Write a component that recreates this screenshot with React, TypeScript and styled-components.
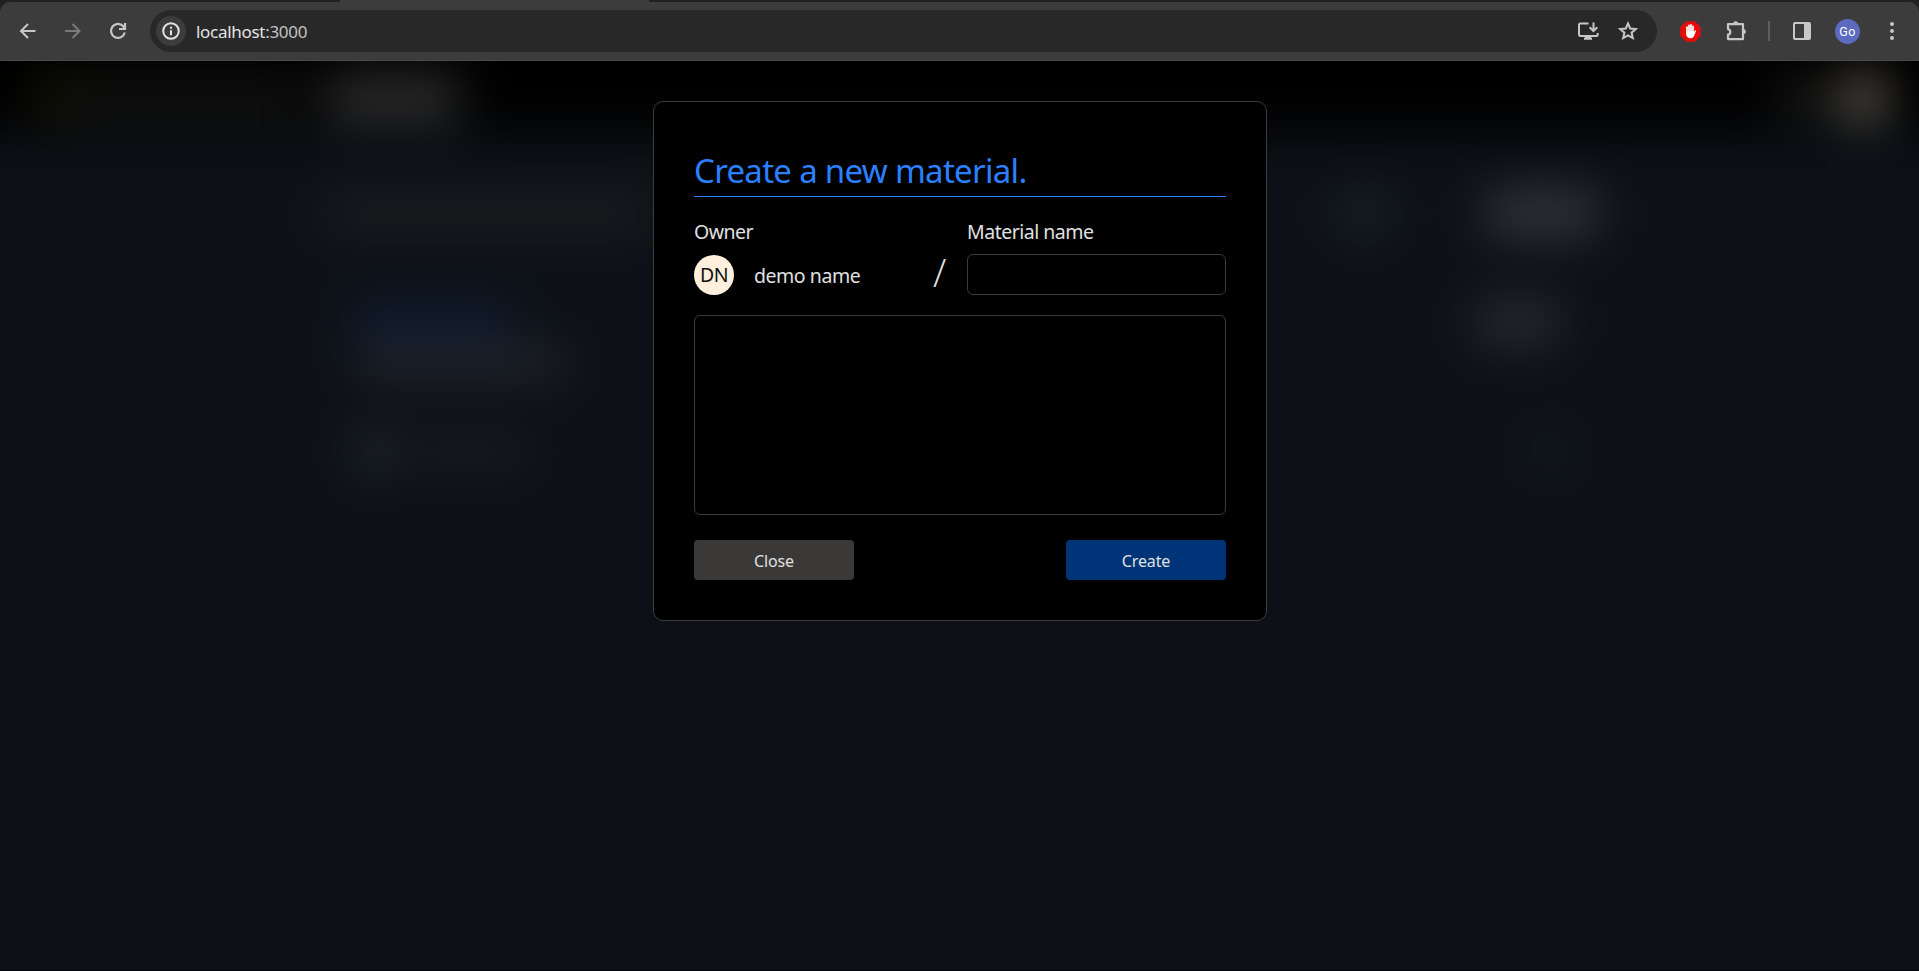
import React from "react";
import styled, { createGlobalStyle } from "styled-components";

const GlobalStyle = createGlobalStyle`
  * { box-sizing: border-box; }
  html, body, #root { height: 100%; }
  body {
    margin: 0;
    overflow: hidden;
    background: #0d1117;
    color: #e0e0e0;
    font-family: "Noto Sans", "Open Sans", sans-serif;
  }
`;

const Window = styled.div`
  height: 100vh;
  display: flex;
  flex-direction: column;
  background: #202121;
`;

const TabStrip = styled.div`
  height: 2px;
  flex: none;
  display: flex;
  padding-left: 340px;
`;

const ActiveTab = styled.div`
  width: 309px;
  background: #3c3c3c;
`;

const Toolbar = styled.header`
  height: 59px;
  flex: none;
  display: flex;
  align-items: center;
  padding: 0 12px 0 12px;
  background: #3c3c3c;
  border-bottom: 1px solid #4a4a4a;
  border-radius: 10px 10px 0 0;
`;

const IconSlot = styled.div<{ $width: number; $color?: string }>`
  width: ${(p) => p.$width}px;
  height: 30px;
  flex: none;
  display: flex;
  align-items: center;
  justify-content: center;
  color: ${(p) => p.$color ?? "#c7c7c7"};
  svg { display: block; }
`;

const AddressBar = styled.div`
  width: 1507px;
  height: 42px;
  flex: none;
  display: flex;
  align-items: center;
  padding: 0 9px 0 6px;
  border-radius: 21px;
  background: #282828;
`;

const InfoBadge = styled.div`
  width: 30px;
  height: 30px;
  display: flex;
  align-items: center;
  justify-content: center;
  border-radius: 50%;
  background: #3c3c3c;
  color: #e3e3e3;
`;

const Address = styled.div`
  flex: 1;
  padding: 1px 0 0 10px;
  font-size: 17px;
  line-height: 24px;
  letter-spacing: -0.3px;
  color: #e3e3e3;
  span { color: #c2c2c2; }
`;

const Divider = styled.div`
  width: 2px;
  height: 20px;
  background: #5e5e5e;
`;

const Profile = styled.div`
  width: 25px;
  height: 25px;
  border-radius: 50%;
  background: #5c6bc0;
  color: #fff;
  font: 12.5px/26px Roboto, sans-serif;
  letter-spacing: 0.4px;
  text-align: center;
`;

const Viewport = styled.main`
  position: relative;
  flex: 1;
  overflow: hidden;
  display: flex;
  justify-content: center;
  align-items: flex-start;
  padding: 40px 0 0 1px;
  background: #0d1117;
  border-bottom: 1px solid #060709;
`;

/* Page behind the dialog; it bleeds past the edges so the blur stays even. */
const Backdrop = styled.div`
  position: absolute;
  inset: -80px;
  background: #0d1117;
  filter: blur(24px);
`;

const BackHeader = styled.div`
  height: 154px;
  padding: 80px 80px 0;
  display: flex;
  align-items: center;
  background: #000;
`;

const BackRow = styled.div<{ $top: number; $height: number }>`
  display: flex;
  align-items: center;
  height: ${(p) => p.$height}px;
  margin-top: ${(p) => p.$top}px;
  padding: 0 80px;
`;

const Block = styled.div<{ $w: number; $h: number; $gap: number; $c: string; $round?: boolean }>`
  flex: none;
  width: ${(p) => p.$w}px;
  height: ${(p) => p.$h}px;
  margin-left: ${(p) => p.$gap}px;
  background: ${(p) => p.$c};
  border-radius: ${(p) => (p.$round ? "50%" : "4px")};
`;

const Dialog = styled.form`
  position: relative;
  width: 614px;
  height: 520px;
  padding: 40px;
  display: flex;
  flex-direction: column;
  border: 1px solid #3b3b3b;
  border-radius: 10px;
  background: #000;
`;

const Title = styled.h1`
  flex: none;
  height: 55px;
  margin: 0 0 20px;
  border-bottom: 1px solid #2b80ff;
  color: #2b80ff;
  font-size: 33px;
  font-weight: 400;
  line-height: 57px;
  letter-spacing: -0.7px;
`;

const Fields = styled.div`
  display: flex;
  margin-bottom: 20px;
`;

const Field = styled.div<{ $width: number }>`
  width: ${(p) => p.$width}px;
`;

const Label = styled.label`
  display: block;
  height: 37px;
  font-size: 19.5px;
  line-height: 29px;
  letter-spacing: -0.5px;
`;

const OwnerLine = styled.div`
  height: 41px;
  display: flex;
  align-items: center;
  font-size: 19.5px;
  letter-spacing: -0.45px;
`;

const Avatar = styled.div`
  width: 40px;
  height: 40px;
  margin: 1px 20px 0 0;
  border-radius: 50%;
  background: #fff0de;
  color: #111;
  line-height: 39px;
  text-align: center;
`;

const OwnerName = styled.span`
  flex: 1;
  padding-top: 2px;
`;

const Slash = styled.span`
  width: 34px;
  font-family: "Open Sans", "Noto Sans", sans-serif;
  font-size: 39px;
  font-weight: 300;
  line-height: 40px;
  padding-bottom: 6px;
`;

const NameInput = styled.input`
  display: block;
  width: 259px;
  height: 41px;
  border: 1px solid #3b3b3b;
  border-radius: 6px;
  background: #000;
  color: #e0e0e0;
  outline: none;
`;

const Description = styled.textarea`
  display: block;
  width: 100%;
  height: 200px;
  margin-bottom: 25px;
  resize: none;
  border: 1px solid #3b3b3b;
  border-radius: 6px;
  background: #000;
  color: #e0e0e0;
  outline: none;
`;

const Actions = styled.div`
  display: flex;
  justify-content: space-between;
`;

const Button = styled.button<{ $primary?: boolean }>`
  width: 160px;
  height: 40px;
  padding: 1px 0 0;
  border: 0;
  border-radius: 4px;
  background: ${(p) => (p.$primary ? "#003478" : "#3b3838")};
  color: #e0e0e0;
  font: 16px/24px "Noto Sans", sans-serif;
  letter-spacing: -0.1px;
`;

const BackIcon = () => (
  <svg width="20" height="20" viewBox="0 0 20 20" fill="none" stroke="currentColor" strokeWidth="2">
    <path d="M17.5 10H3.5M10 3L3 10l7 7" />
  </svg>
);

const ForwardIcon = () => (
  <svg width="20" height="20" viewBox="0 0 20 20" fill="none" stroke="currentColor" strokeWidth="2">
    <path d="M2 10h14M9.5 3l7 7-7 7" />
  </svg>
);

const ReloadIcon = () => (
  <svg width="20" height="20" viewBox="0 0 20 20" fill="none" stroke="currentColor" strokeWidth="2.2">
    <path d="M16.8 11.6A7 7 0 1 1 15.2 5.2l1.6 2M17 2v6h-6" />
  </svg>
);

const InfoIcon = () => (
  <svg width="20" height="20" viewBox="0 0 20 20" fill="none" stroke="currentColor" strokeWidth="2">
    <circle cx="10" cy="10" r="7.8" />
    <path d="M10 9.2v5M10 5.7v2" />
  </svg>
);

const InstallIcon = () => (
  <svg width="22" height="20" viewBox="0 0 22 20" fill="none" stroke="currentColor" strokeWidth="2">
    <path d="M11.5 2.5H3.2a1.2 1.2 0 0 0-1.2 1.2v10.1a1.2 1.2 0 0 0 1.2 1.2h16.3a1.2 1.2 0 0 0 1.2-1.2V12" />
    <path d="M7 17.8h8M16.5 1.5v8.2M12.7 6.3l3.8 3.8 3.8-3.8" />
    <path d="M8 16.3h6" />
  </svg>
);

const StarIcon = () => (
  <svg width="22" height="22" viewBox="0 0 22 22" fill="none" stroke="currentColor" strokeWidth="2">
    <path d="M11 3.4l2.2 5.1 5.6.5-4.2 3.7 1.2 5.4-4.8-2.8-4.8 2.8 1.2-5.4L3.2 9l5.6-.5z" />
  </svg>
);

const StopHandIcon = () => (
  <svg width="21" height="21" viewBox="0 0 21 21">
    <path d="M6.2.2h8.6l6 6v8.6l-6 6H6.2l-6-6V6.2z" fill="#e40d0d" />
    <g stroke="#fff" strokeWidth="1.7" strokeLinecap="round">
      <path d="M7 6v7M9 4.3v7M11 3.9v7M13 5.3v7" />
    </g>
    <path d="M6.2 10h7.6v1.6l1-1.8c.5-.8 1.5-.4 1.2.5l-1.7 4c-.7 1.9-1.7 2.9-3.7 2.9-2.8 0-4.4-1.7-4.4-4.2z" fill="#fff" />
  </svg>
);

const PuzzleIcon = () => (
  <svg width="22" height="22" viewBox="0 0 22 22" fill="currentColor">
    <path
      d="M3 4.1h15v15H3v-4.4c3-.4 3-5.2 0-5.6z"
      fill="none"
      stroke="currentColor"
      strokeWidth="2.2"
      strokeLinejoin="round"
    />
    <path d="M8 3.8a2.6 2.6 0 0 1 5.2 0zM18.2 8.9a2.6 2.6 0 0 1 0 5.2z" />
  </svg>
);

const SidePanelIcon = () => (
  <svg width="20" height="20" viewBox="0 0 20 20" fill="none" stroke="currentColor" strokeWidth="2">
    <rect x="2" y="2" width="16" height="16" rx="1" />
    <path d="M12 2h6v16h-6z" fill="currentColor" stroke="none" />
  </svg>
);

const MenuIcon = () => (
  <svg width="6" height="20" viewBox="0 0 6 20" fill="currentColor">
    <circle cx="3" cy="3" r="2" />
    <circle cx="3" cy="10" r="2" />
    <circle cx="3" cy="17" r="2" />
  </svg>
);

const BrowserToolbar = () => (
  <Toolbar>
    <IconSlot $width={31}><BackIcon /></IconSlot>
    <IconSlot $width={59} $color="#7b7b7b"><ForwardIcon /></IconSlot>
    <IconSlot $width={31}><ReloadIcon /></IconSlot>
    <IconSlot $width={17} />
    <AddressBar>
      <InfoBadge><InfoIcon /></InfoBadge>
      <Address>localhost<span>:3000</span></Address>
      <IconSlot $width={41}><InstallIcon /></IconSlot>
      <IconSlot $width={40}><StarIcon /></IconSlot>
    </AddressBar>
    <IconSlot $width={11} />
    <IconSlot $width={45}><StopHandIcon /></IconSlot>
    <IconSlot $width={46}><PuzzleIcon /></IconSlot>
    <IconSlot $width={20}><Divider /></IconSlot>
    <IconSlot $width={46}><SidePanelIcon /></IconSlot>
    <IconSlot $width={45}><Profile>Go</Profile></IconSlot>
    <IconSlot $width={44}><MenuIcon /></IconSlot>
  </Toolbar>
);

const BlurredPage = () => (
  <Backdrop>
    <BackHeader>
      <Block $gap={38} $w={34} $h={36} $c="#201f0c" />
      <Block $gap={6} $w={225} $h={36} $c="#151514" />
      <Block $gap={23} $w={134} $h={48} $c="#2d2d2d" />
      <Block $gap={1320} $w={50} $h={36} $c="#1e1e1d" />
      <Block $gap={8} $w={52} $h={52} $c="#5f5b54" $round />
    </BackHeader>
    <BackRow $top={53} $height={50}>
      <Block $gap={325} $w={325} $h={40} $c="#1a1e20" />
      <Block $gap={690} $w={46} $h={36} $c="#20242d" />
      <Block $gap={100} $w={112} $h={46} $c="#323639" />
    </BackRow>
    <BackRow $top={57} $height={54}>
      <Block $gap={355} $w={155} $h={28} $c="#12203a" />
      <Block $gap={965} $w={85} $h={44} $c="#282b2d" />
    </BackRow>
    <BackRow $top={0} $height={28}>
      <Block $gap={357} $w={210} $h={28} $c="#26282f" />
    </BackRow>
    <BackRow $top={49} $height={50}>
      <Block $gap={353} $w={42} $h={48} $c="#23272f" $round />
      <Block $gap={12} $w={122} $h={32} $c="#191d22" />
      <Block $gap={1005} $w={34} $h={30} $c="#171b24" />
    </BackRow>
  </Backdrop>
);

export default function App() {
  return (
    <>
      <GlobalStyle />
      <Window>
        <TabStrip><ActiveTab /></TabStrip>
        <BrowserToolbar />
        <Viewport>
          <BlurredPage />
          <Dialog onSubmit={(e: React.FormEvent) => e.preventDefault()}>
            <Title>Create a new material.</Title>
            <Fields>
              <Field $width={273}>
                <Label>Owner</Label>
                <OwnerLine>
                  <Avatar>DN</Avatar>
                  <OwnerName>demo name</OwnerName>
                  <Slash>/</Slash>
                </OwnerLine>
              </Field>
              <Field $width={259}>
                <Label htmlFor="material-name">Material name</Label>
                <NameInput id="material-name" />
              </Field>
            </Fields>
            <Description />
            <Actions>
              <Button type="button">Close</Button>
              <Button type="submit" $primary>Create</Button>
            </Actions>
          </Dialog>
        </Viewport>
      </Window>
    </>
  );
}
